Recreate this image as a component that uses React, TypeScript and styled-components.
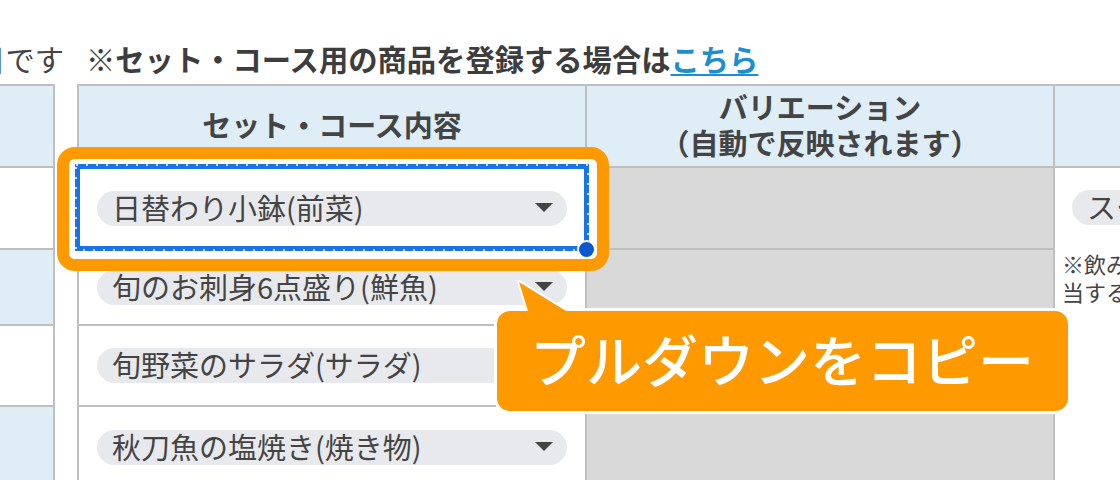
import React from 'react';
import styled, { createGlobalStyle } from 'styled-components';

const ROWS = '82px 82px 76px 81px 82px';
const LINE = '#bfbfbf';

const GlobalStyle = createGlobalStyle`
  html, body {
    margin: 0;
    padding: 0;
    background: #fff;
  }
  body {
    font-family: "Noto Sans CJK JP", "Noto Sans", sans-serif;
    color: #444;
    overflow: hidden;
  }
`;

const Canvas = styled.div`
  position: relative;
  width: 1120px;
  height: 480px;
  overflow: hidden;
  padding-top: 38px;
  box-sizing: border-box;
`;

const TopLine = styled.div`
  display: flex;
  align-items: center;
  height: 40px;
  line-height: 40px;
  font-size: 29.3px;
  white-space: nowrap;
`;

const Lead = styled.div`
  flex: none;
  width: 64px;
  display: flex;
  justify-content: flex-end;
`;

const Notice = styled.div`
  margin-left: 22px;
  font-weight: 700;
  color: #3d3d3d;
`;

const Link = styled.a`
  color: #1b8fd0;
  text-decoration: underline;
  text-decoration-thickness: 2px;
  text-underline-offset: 3px;
`;

const Tables = styled.div`
  display: flex;
  gap: 22px;
  margin-top: 6px;
`;

const SideTable = styled.div`
  flex: none;
  display: grid;
  grid-template-columns: 55px;
  grid-template-rows: ${ROWS};
  border-top: 2px solid ${LINE};
`;

const SideCell = styled.div<{ $blue?: boolean }>`
  border-right: 2px solid ${LINE};
  border-bottom: 2px solid ${LINE};
  background: ${p => (p.$blue ? '#dfedf7' : '#fff')};
`;

const MainTable = styled.div`
  flex: none;
  display: grid;
  grid-template-columns: 508px 468px 320px;
  grid-template-rows: ${ROWS};
  border-top: 2px solid ${LINE};
  border-left: 2px solid ${LINE};
`;

const Cell = styled.div`
  box-sizing: border-box;
  border-right: 2px solid ${LINE};
  border-bottom: 2px solid ${LINE};
`;

const HeadCell = styled(Cell)`
  display: flex;
  align-items: center;
  justify-content: center;
  padding-bottom: 4px;
  background: #dfedf7;
  font-size: 29px;
  font-weight: 700;
  line-height: 36px;
  text-align: center;
  color: #444;
  white-space: nowrap;
`;

const SelectCell = styled(Cell)`
  display: flex;
  align-items: center;
  padding: 0 18px;
  background: #fff;
`;

const VariationCell = styled(Cell)`
  background: #d9d9d9;
`;

const OptionCell = styled(Cell)`
  grid-column: 3;
  grid-row: 2 / span 4;
  padding: 22px 0 0 7px;
  background: #fff;
  overflow: hidden;
`;

const Select = styled.div<{ $width?: number }>`
  flex: none;
  display: flex;
  align-items: center;
  justify-content: space-between;
  box-sizing: border-box;
  width: ${p => (p.$width ? `${p.$width}px` : '100%')};
  height: 35px;
  margin-left: ${p => (p.$width ? '10px' : '0')};
  padding: 0 14px 2px 15px;
  border-radius: 18px;
  background: #e8e9ec;
  font-size: 29px;
  line-height: 33px;
  color: #444;
  white-space: nowrap;
`;

const Note = styled.div`
  margin-top: 24px;
  font-size: 22px;
  line-height: 28px;
  color: #444;
  white-space: nowrap;
`;

const Frame = styled.div`
  position: absolute;
  left: 57px;
  top: 147px;
  width: 552px;
  height: 124px;
  box-sizing: border-box;
  border: 12px solid #ff9900;
  border-radius: 18px;
`;

const Ring = styled.div`
  height: 100%;
  box-sizing: border-box;
  border-style: solid;
  border-color: #fff;
  border-width: 5px 8px 8px 6px;
  border-radius: 6px;
`;

const Selection = styled.div`
  position: relative;
  height: 100%;
  box-sizing: border-box;
  border: 5px solid #1a73e8;
`;

const Ants = styled.svg`
  position: absolute;
  left: -5px;
  top: -5px;
`;

const Handle = styled.div`
  position: absolute;
  right: -12px;
  bottom: -13px;
  width: 19px;
  height: 19px;
  box-sizing: border-box;
  border: 2px solid #fff;
  border-radius: 50%;
  background: #0b57d0;
`;

const Bubble = styled.div`
  position: absolute;
  left: 494px;
  top: 308px;
  width: 577px;
  height: 106px;
  box-sizing: border-box;
  display: flex;
  align-items: center;
  padding: 0 0 6px 33px;
  border: 3px solid #fff;
  border-radius: 16px;
  background: #ff9900;
  color: #fff;
  font-size: 56px;
  font-weight: 500;
  line-height: 1;
  white-space: nowrap;
`;

const Tail = styled.svg`
  position: absolute;
  left: 510px;
  top: 276px;
`;

const Arrow = () => (
  <svg width="18" height="9" viewBox="0 0 18 9">
    <polygon points="0,0 18,0 9,9" fill="#444" />
  </svg>
);

const dishes = [
  '日替わり小鉢(前菜)',
  '旬のお刺身6点盛り(鮮魚)',
  '旬野菜のサラダ(サラダ)',
  '秋刀魚の塩焼き(焼き物)',
];

const App = () => {
  return (
    <>
      <GlobalStyle />
      <Canvas>
        <TopLine>
          <Lead>※は必須項目です</Lead>
          <Notice>
            ※セット・コース用の商品を登録する場合は<Link href="#">こちら</Link>
          </Notice>
        </TopLine>

        <Tables>
          <SideTable>
            <SideCell $blue />
            <SideCell />
            <SideCell $blue />
            <SideCell />
            <SideCell $blue />
          </SideTable>

          <MainTable>
            <HeadCell>セット・コース内容</HeadCell>
            <HeadCell>
              バリエーション
              <br />
              （自動で反映されます）
            </HeadCell>
            <HeadCell />

            <OptionCell>
              <Select $width={220}>
                スープ
                <Arrow />
              </Select>
              <Note>
                ※飲み放題に該
                <br />
                当するものを選択
              </Note>
            </OptionCell>

            {dishes.map(name => (
              <React.Fragment key={name}>
                <SelectCell>
                  <Select>
                    {name}
                    <Arrow />
                  </Select>
                </SelectCell>
                <VariationCell />
              </React.Fragment>
            ))}
          </MainTable>
        </Tables>

        <Frame>
          <Ring>
            <Selection>
              <Ants width="514" height="87" viewBox="0 0 514 87">
                <rect
                  x="1"
                  y="1"
                  width="512"
                  height="85"
                  fill="none"
                  stroke="#fff"
                  strokeWidth="1.5"
                  strokeDasharray="2 8"
                />
              </Ants>
              <Handle />
            </Selection>
          </Ring>
        </Frame>

        <Bubble>プルダウンをコピー</Bubble>
        <Tail width="70" height="44" viewBox="0 0 70 44">
          <path
            d="M17.4 33 L9 6 L52.7 33"
            fill="none"
            stroke="#fff"
            strokeWidth="4"
            strokeLinejoin="round"
          />
          <polygon points="9,6 65.7,41 19.9,41" fill="#ff9900" />
        </Tail>
      </Canvas>
    </>
  );
};

export default App;
